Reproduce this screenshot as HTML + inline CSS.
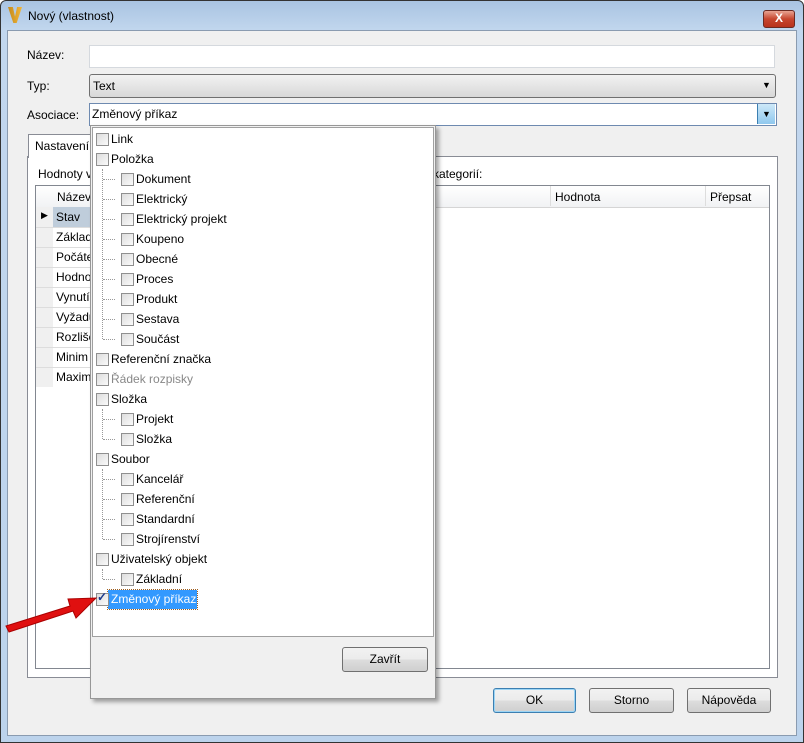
<!DOCTYPE html><html><head><meta charset="utf-8"><style>
body{margin:0;width:804px;height:743px;position:relative;font-family:"Liberation Sans",sans-serif;font-size:12px;color:#000;overflow:hidden;background:#fff}
.a{position:absolute}
.cb{position:absolute;width:11px;height:11px;border:1px solid #8f8f8f;background:linear-gradient(135deg,#ddd,#fafafa)}
.t{position:absolute;white-space:nowrap}
.btn{position:absolute;border:1px solid #707070;border-radius:3px;background:linear-gradient(#f2f2f2 0,#ebebeb 50%,#dddddd 51%,#cfcfcf);text-align:center;line-height:23px}
.dl{position:absolute;border-left:1px dotted #999}
.dh{position:absolute;border-top:1px dotted #999;width:12px}
</style></head><body>
<div class="a" style="left:0;top:0;width:802px;height:741px;border:1px solid #333;border-radius:6px 6px 0 0;background:linear-gradient(#a9c4e2,#c2d7ee 30px,#bcd3ec)"></div>
<div class="a" style="left:8px;top:7px;width:14px;height:16px;background:linear-gradient(90deg,#c58a1a,#f2b73a);clip-path:polygon(0 0,35% 0,50% 60%,65% 0,100% 0,62% 100%,38% 100%)"></div>
<div class="t" style="left:28px;top:9px;font-size:12px">Nový (vlastnost)</div>
<div class="a" style="left:763px;top:10px;width:30px;height:16px;border:1px solid #6b2a22;border-radius:3px;background:linear-gradient(#e8a493,#c7462f 50%,#b8321c);color:#fff;font-weight:bold;text-align:center;line-height:15px;font-size:12px">X</div>
<div class="a" style="left:7px;top:30px;width:790px;height:706px;background:#f0f0f0;border:1px solid #8a9bb0;box-sizing:border-box"></div>
<div class="t" style="left:27px;top:48px">Název:</div>
<div class="a" style="left:89px;top:45px;width:684px;height:21px;border:1px solid #d5d9de;background:#fff"></div>
<div class="t" style="left:27px;top:79px">Typ:</div>
<div class="a" style="left:89px;top:74px;width:685px;height:22px;border:1px solid #707070;border-radius:3px;background:linear-gradient(#f2f2f2,#e5e5e5 50%,#d8d8d8)"></div>
<div class="t" style="left:93px;top:79px">Text</div><div class="t" style="left:762px;top:80px;font-size:9px">▼</div>
<div class="t" style="left:27px;top:108px">Asociace:</div>
<div class="a" style="left:89px;top:103px;width:686px;height:21px;border:1px solid #6e8ab0;background:#fff"></div>
<div class="t" style="left:92px;top:107px">Změnový příkaz</div>
<div class="a" style="left:757px;top:104px;width:17px;height:20px;background:linear-gradient(#cde8f8,#8fc8ee);border-left:1px solid #3c7fb1;font-size:9px;text-align:center;line-height:20px">▼</div>
<div class="a" style="left:27px;top:156px;width:749px;height:520px;border:1px solid #898c95;background:#fff"></div>
<div class="a" style="left:28px;top:134px;width:64px;height:23px;border:1px solid #898c95;border-bottom:none;background:#fff"></div>
<div class="t" style="left:35px;top:139px">Nastavení</div>
<div class="t" style="left:38px;top:167px">Hodnoty v</div>
<div class="t" style="left:433px;top:167px">kategorií:</div>
<div class="a" style="left:35px;top:185px;width:733px;height:482px;border:1px solid #828790;background:#fff"></div>
<div class="a" style="left:36px;top:186px;width:733px;height:21px;background:linear-gradient(#fff,#f1f2f4);border-bottom:1px solid #d5d5d5"></div>
<div class="t" style="left:57px;top:190px">Název</div><div class="t" style="left:555px;top:190px">Hodnota</div><div class="t" style="left:710px;top:190px">Přepsat</div>
<div class="a" style="left:550px;top:186px;border-left:1px solid #ddd;height:20px"></div><div class="a" style="left:705px;top:186px;border-left:1px solid #ddd;height:20px"></div>
<div class="a" style="left:36px;top:207px;width:17px;height:180px;background:#f0f0f0"></div>
<div class="a" style="left:53px;top:207px;width:40px;height:20px;background:#bfcddb"></div>
<div class="t" style="left:41px;top:210px;font-size:9px">▶</div>
<div class="t" style="left:56px;line-height:20px;top:207px;color:#000">Stav<br>Základ<br>Počáte<br>Hodno<br>Vynutí<br>Vyžadu<br>Rozliše<br>Minim<br>Maxim</div>
<div class="a" style="left:36px;top:227px;width:57px;height:160px;background:repeating-linear-gradient(#ddd 0 1px,transparent 1px 20px)"></div>
<div class="a" style="left:90px;top:125px;width:344px;height:572px;border:1px solid #979797;background:#f0f0f0;box-shadow:3px 3px 4px rgba(0,0,0,.35)"></div>
<div class="a" style="left:92px;top:127px;width:340px;height:508px;border:1px solid #a0a0a0;background:#fff"></div>
<div class="dl" style="left:102px;top:169px;height:170px"></div>
<div class="dl" style="left:102px;top:409px;height:30px"></div>
<div class="dl" style="left:102px;top:469px;height:70px"></div>
<div class="dl" style="left:102px;top:569px;height:10px"></div>
<div id="L"></div>
<div class="a" style="left:108px;top:590px;width:89px;height:19px;background:#3399ff;outline:1px dotted #a06020"></div>
<div class="cb" style="left:96px;top:593px"></div><div class="t" style="left:97px;top:590px;color:#1b3a8c;font-weight:bold">✓</div>
<div class="t" style="left:111px;top:592px;color:#fff">Změnový příkaz</div>
<div class="btn" style="left:342px;top:647px;width:84px;height:23px">Zavřít</div>
<div class="btn" style="left:493px;top:688px;width:81px;height:23px;border-color:#3c7fb1;box-shadow:inset 0 0 0 1px #9cd5f5">OK</div>
<div class="btn" style="left:589px;top:688px;width:83px;height:23px">Storno</div>
<div class="btn" style="left:687px;top:688px;width:82px;height:23px">Nápověda</div>
<svg class="a" style="left:0;top:590px" width="100" height="45"><path d="M6 36 L70 16 L68 9 L96 8 L76 28 L73 21 L9 42 Z" fill="#e01010" stroke="#a00" stroke-width="1"/></svg>
<script>
var items=[["Link",0],["Položka",0],["Dokument",1],["Elektrický",1],["Elektrický projekt",1],["Koupeno",1],["Obecné",1],["Proces",1],["Produkt",1],["Sestava",1],["Součást",1],["Referenční značka",0],["Řádek rozpisky",0,1],["Složka",0],["Projekt",1],["Složka",1],["Soubor",0],["Kancelář",1],["Referenční",1],["Standardní",1],["Strojírenství",1],["Uživatelský objekt",0],["Základní",1]];
var h="";items.forEach(function(it,i){var y=133+i*20,x=it[1]?121:96;if(it[1])h+='<div class="dh" style="left:103px;top:'+(y+6)+'px"></div>';h+='<div class="cb" style="left:'+x+'px;top:'+y+'px"></div><div class="t" style="left:'+(x+15)+'px;top:'+(y-1)+'px;'+(it[2]?'color:#888':'')+'">'+it[0]+'</div>';});
document.getElementById("L").innerHTML=h;
</script>
</body></html>
